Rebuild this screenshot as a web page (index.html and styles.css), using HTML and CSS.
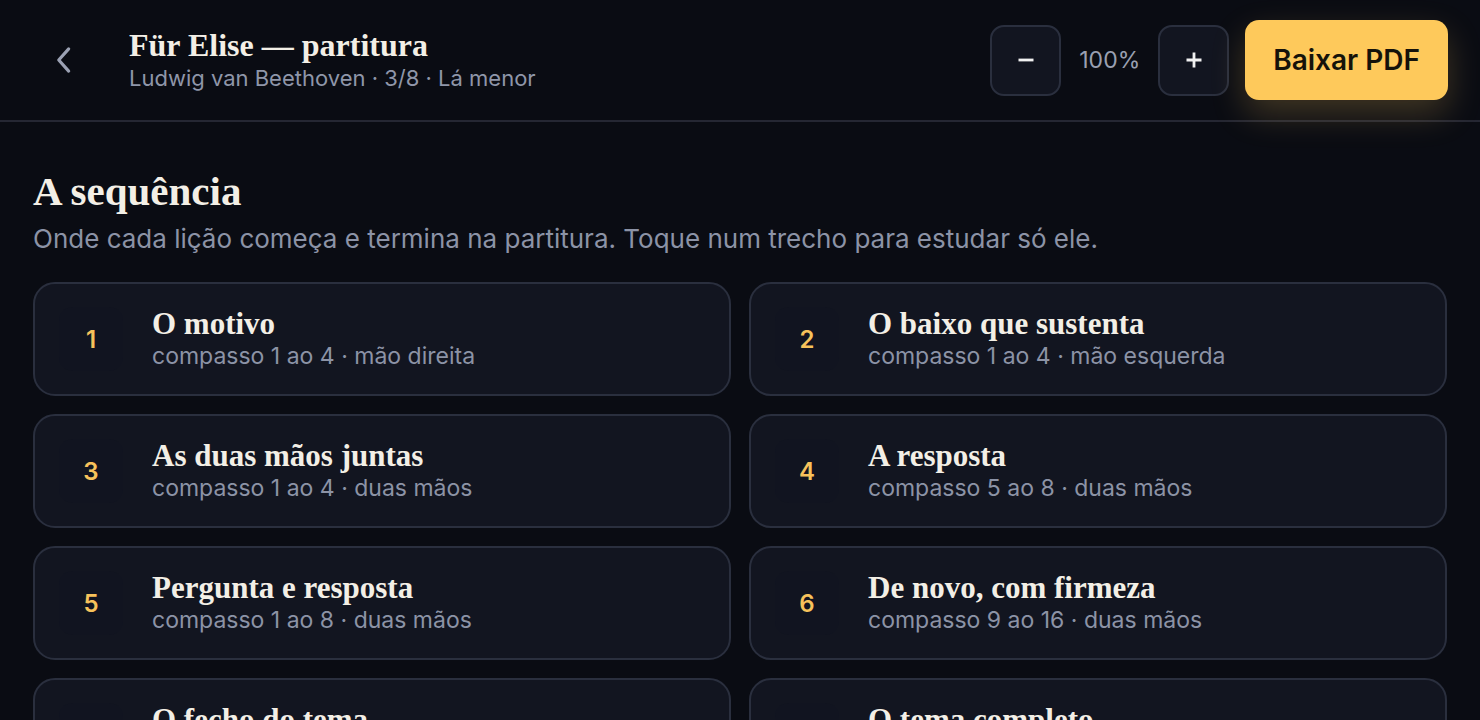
FILE: index.html
```html
<!DOCTYPE html>
<html lang="pt-BR">
  <head>
    <meta charset="UTF-8" />
    <meta name="viewport" content="width=device-width, initial-scale=1.0" />
    <title>Für Elise — partitura</title>
    <link rel="stylesheet" href="styles.css">
  </head>
  <body>
    <header class="topbar">
      <button class="back" aria-label="Voltar">
        <svg width="28" height="28" viewBox="0 0 24 24" fill="none" stroke="currentColor" stroke-width="2.7" stroke-linecap="round" stroke-linejoin="round">
          <path d="M16 2.5 L7.5 12 L16 21.5" />
        </svg>
      </button>
      <div class="piece">
        <h1>Für Elise — partitura</h1>
        <p>Ludwig van Beethoven · 3/8 · Lá menor</p>
      </div>
      <div class="controls">
        <button class="zoom-btn" aria-label="Diminuir">
          <svg width="18" height="18" viewBox="0 0 18 18"><path d="M1.5 9 H16.5" stroke="currentColor" stroke-width="2.8" /></svg>
        </button>
        <span class="zoom-value">100%</span>
        <button class="zoom-btn" aria-label="Aumentar">
          <svg width="18" height="18" viewBox="0 0 18 18"><path d="M1.5 9 H16.5 M9 1.5 V16.5" stroke="currentColor" stroke-width="2.8" /></svg>
        </button>
        <button class="download">Baixar PDF</button>
      </div>
    </header>

    <main class="content">
      <h2>A sequência</h2>
      <p class="lead">Onde cada lição começa e termina na partitura. Toque num trecho para estudar só ele.</p>

      <div class="lessons" id="lessons"></div>
    </main>

    <script>
      const lessons = [
        { title: "O motivo", info: "compasso 1 ao 4 · mão direita" },
        { title: "O baixo que sustenta", info: "compasso 1 ao 4 · mão esquerda" },
        { title: "As duas mãos juntas", info: "compasso 1 ao 4 · duas mãos" },
        { title: "A resposta", info: "compasso 5 ao 8 · duas mãos" },
        { title: "Pergunta e resposta", info: "compasso 1 ao 8 · duas mãos" },
        { title: "De novo, com firmeza", info: "compasso 9 ao 16 · duas mãos" },
        { title: "O fecho do tema", info: "compasso 17 ao 22 · duas mãos" },
        { title: "O tema completo", info: "compasso 1 ao 22 · duas mãos" }
      ];

      const listElement = document.getElementById("lessons");

      lessons.forEach((lesson, index) => {
        const card = document.createElement("button");
        card.className = "lesson";
        card.innerHTML = `
          <span class="lesson-num">${index + 1}</span>
          <span class="lesson-text">
            <span class="lesson-title">${lesson.title}</span>
            <span class="lesson-info">${lesson.info}</span>
          </span>
        `;
        listElement.appendChild(card);
      });
    </script>
  </body>
</html>
```

FILE: styles.css
```css
body {
  margin: 0;
  background: #0a0c13;
  color: #f3efe6;
  font-family: Inter, "Noto Sans", sans-serif;
  overflow: hidden;
}

button {
  font-family: inherit;
  cursor: pointer;
}

.topbar {
  display: flex;
  align-items: center;
  height: 120px;
  padding: 0 32px;
  border-bottom: 2px solid #252733;
}

.back {
  width: 64px;
  height: 64px;
  margin-right: 33px;
  padding: 0;
  display: flex;
  align-items: center;
  justify-content: center;
  background: none;
  border: none;
  color: #9ba1b3;
}

.piece {
  flex: 1;
}

.piece h1 {
  margin: 0;
  font-family: "Liberation Serif", serif;
  font-weight: 700;
  font-size: 32px;
  line-height: 1.05;
}

.piece p {
  margin: 2px 0 0;
  font-size: 22px;
  color: #8f96a9;
}

.controls {
  display: flex;
  align-items: center;
}

.zoom-btn {
  width: 71px;
  height: 71px;
  padding: 0;
  display: flex;
  align-items: center;
  justify-content: center;
  background: #121520;
  border: 2px solid #2a2f3e;
  border-radius: 14px;
  color: #f1f1f1;
}

.zoom-value {
  width: 97px;
  text-align: center;
  font-size: 23px;
  color: #9aa0b1;
}

.download {
  margin-left: 16px;
  height: 80px;
  padding: 0 28px;
  border: none;
  border-radius: 14px;
  background: #fec95b;
  color: #15120a;
  font-size: 28px;
  font-weight: 600;
  box-shadow: 0 14px 34px rgba(254, 201, 91, 0.22);
}

.content {
  padding: 45px 33px 0;
}

.content h2 {
  margin: 0;
  font-family: "Liberation Serif", serif;
  font-weight: 700;
  font-size: 41px;
  line-height: 1.2;
}

.lead {
  margin: 7px 0 28px;
  font-size: 26px;
  line-height: 31px;
  color: #8c93a6;
}

.lessons {
  display: grid;
  grid-template-columns: 1fr 1fr;
  gap: 18px;
}

.lesson {
  display: flex;
  align-items: center;
  height: 114px;
  padding: 0 24px;
  background: #121520;
  border: 2px solid #2a2f3e;
  border-radius: 22px;
  text-align: left;
  color: inherit;
}

.lesson-num {
  width: 64px;
  height: 64px;
  flex-shrink: 0;
  margin-right: 29px;
  display: flex;
  align-items: center;
  justify-content: center;
  border-radius: 14px;
  background: #111420;
  color: #f7c25b;
  font-size: 24px;
  font-weight: 600;
}

.lesson-text {
  display: flex;
  flex-direction: column;
}

.lesson-title {
  font-family: "Liberation Serif", serif;
  font-weight: 700;
  font-size: 31px;
  line-height: 1.05;
}

.lesson-info {
  margin-top: 2px;
  font-size: 23px;
  color: #8c93a6;
}
```
